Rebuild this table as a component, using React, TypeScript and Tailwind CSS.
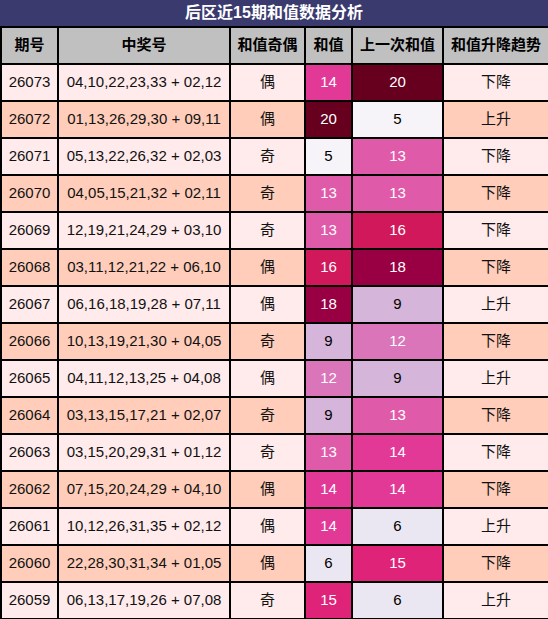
import React from 'react';

type Row = {
  id: string;
  nums: string;
  parity: string;
  sum: number;
  prev: number;
  trend: string;
};

const rows: Row[] = [
  { id: '26073', nums: '04,10,22,23,33 + 02,12', parity: '偶', sum: 14, prev: 20, trend: '下降' },
  { id: '26072', nums: '01,13,26,29,30 + 09,11', parity: '偶', sum: 20, prev: 5, trend: '上升' },
  { id: '26071', nums: '05,13,22,26,32 + 02,03', parity: '奇', sum: 5, prev: 13, trend: '下降' },
  { id: '26070', nums: '04,05,15,21,32 + 02,11', parity: '奇', sum: 13, prev: 13, trend: '下降' },
  { id: '26069', nums: '12,19,21,24,29 + 03,10', parity: '奇', sum: 13, prev: 16, trend: '下降' },
  { id: '26068', nums: '03,11,12,21,22 + 06,10', parity: '偶', sum: 16, prev: 18, trend: '下降' },
  { id: '26067', nums: '06,16,18,19,28 + 07,11', parity: '偶', sum: 18, prev: 9, trend: '上升' },
  { id: '26066', nums: '10,13,19,21,30 + 04,05', parity: '奇', sum: 9, prev: 12, trend: '下降' },
  { id: '26065', nums: '04,11,12,13,25 + 04,08', parity: '偶', sum: 12, prev: 9, trend: '上升' },
  { id: '26064', nums: '03,13,15,17,21 + 02,07', parity: '奇', sum: 9, prev: 13, trend: '下降' },
  { id: '26063', nums: '03,15,20,29,31 + 01,12', parity: '奇', sum: 13, prev: 14, trend: '下降' },
  { id: '26062', nums: '07,15,20,24,29 + 04,10', parity: '偶', sum: 14, prev: 14, trend: '下降' },
  { id: '26061', nums: '10,12,26,31,35 + 02,12', parity: '偶', sum: 14, prev: 6, trend: '上升' },
  { id: '26060', nums: '22,28,30,31,34 + 01,05', parity: '偶', sum: 6, prev: 15, trend: '下降' },
  { id: '26059', nums: '06,13,17,19,26 + 07,08', parity: '奇', sum: 15, prev: 6, trend: '上升' },
];

// heat colours per sum value, written out so tailwind picks them up
const heat: Record<number, string> = {
  5: 'bg-[#f6f3f9] text-black',
  6: 'bg-[#ebe7f2] text-black',
  9: 'bg-[#d5b5d9] text-black',
  12: 'bg-[#d975b8] text-white',
  13: 'bg-[#df5aa8] text-white',
  14: 'bg-[#e23996] text-white',
  15: 'bg-[#de2378] text-white',
  16: 'bg-[#d0185a] text-white',
  18: 'bg-[#990043] text-white',
  20: 'bg-[#67001f] text-white',
};

const cell = 'border-2 border-black text-center h-[37px] p-0';

export default function App() {
  return (
    <div className="w-[548px] font-['Liberation_Sans','Noto_Sans_CJK_SC',sans-serif] text-[15px] text-[#111]">
      <div className="h-[26px] bg-[#3b3a6e] text-white font-bold text-[16px] flex items-center justify-center">
        后区近15期和值数据分析
      </div>
      <table className="w-[548px] table-fixed border-collapse">
        <colgroup>
          <col className="w-[57px]" />
          <col className="w-[172px]" />
          <col className="w-[75px]" />
          <col className="w-[47px]" />
          <col className="w-[91px]" />
          <col className="w-[106px]" />
        </colgroup>
        <thead>
          <tr className="bg-[#c0c0c0] font-bold text-black">
            <th className={cell}>期号</th>
            <th className={cell}>中奖号</th>
            <th className={cell}>和值奇偶</th>
            <th className={cell}>和值</th>
            <th className={cell}>上一次和值</th>
            <th className={cell}>和值升降趋势</th>
          </tr>
        </thead>
        <tbody>
          {rows.map((r, i) => (
            <tr key={r.id} className={i % 2 === 0 ? 'bg-[#ffebeb]' : 'bg-[#ffcdb9]'}>
              <td className={cell}>{r.id}</td>
              <td className={cell}>{r.nums}</td>
              <td className={cell}>{r.parity}</td>
              <td className={`${cell} ${heat[r.sum]}`}>{r.sum}</td>
              <td className={`${cell} ${heat[r.prev]}`}>{r.prev}</td>
              <td className={cell}>{r.trend}</td>
            </tr>
          ))}
        </tbody>
      </table>
    </div>
  );
}
